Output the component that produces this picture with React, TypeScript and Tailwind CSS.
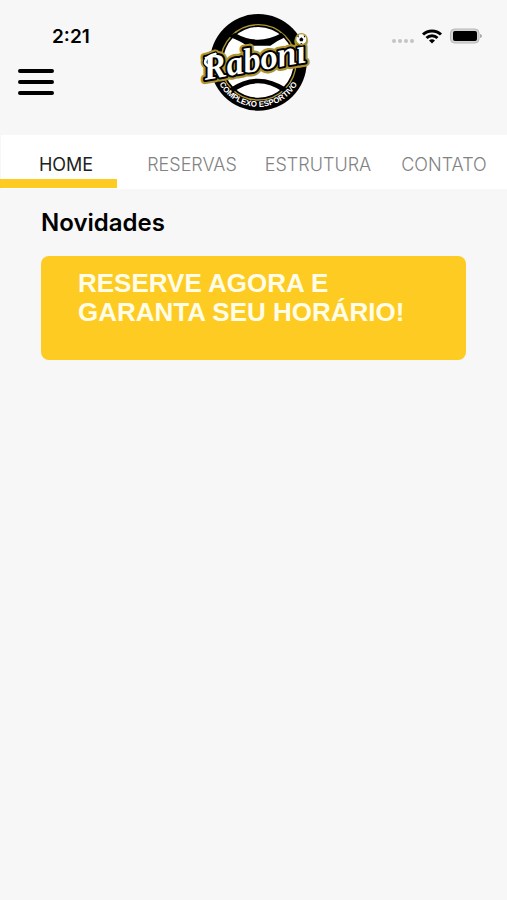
import { useState } from "react";

const tabs = ["HOME", "RESERVAS", "ESTRUTURA", "CONTATO"];

export default function App() {
  const [active, setActive] = useState("HOME");

  return (
    <div className="min-h-screen bg-[#f7f7f7] font-['Inter',sans-serif] text-black">
      <header className="grid h-[135px] grid-cols-[1fr_auto_1fr] items-start">
        <div className="flex flex-col items-start">
          <span className="ml-[52px] mt-[25px] text-[19px] font-semibold leading-6">2:21</span>
          <button type="button" aria-label="Menu" className="ml-[17px] mt-[19px] cursor-pointer">
            <MenuIcon />
          </button>
        </div>
        <Logo />
        <div className="mr-6 mt-7 flex items-center justify-end">
          <StatusIcons />
        </div>
      </header>

      <nav className="ml-px flex h-[54px] bg-white pl-[2px]">
        {tabs.map((tab) => (
          <button
            key={tab}
            type="button"
            onClick={() => setActive(tab)}
            className={`relative flex-1 cursor-pointer pb-[10px] pt-4 text-center text-lg leading-7 ${
              active === tab ? "text-[#222222]" : "font-light text-[#828282]"
            }`}
          >
            {tab}
            {active === tab && <span className="absolute -left-[3px] bottom-px right-3 h-[9px] bg-[#fecb23]" />}
          </button>
        ))}
      </nav>

      <main className="px-[41px] pt-[18px]">
        <h1 className="text-2xl font-semibold leading-8">Novidades</h1>
        <a
          href="#reservas"
          className="mt-[17px] block min-h-[104px] rounded-lg bg-[#fecb23] px-[37px] pt-[13px] font-['Liberation_Sans',sans-serif] text-[26px] font-bold leading-[29px] text-[#fffde8]"
        >
          RESERVE AGORA E
          <br />
          GARANTA SEU HORÁRIO!
        </a>
      </main>
    </div>
  );
}

function MenuIcon() {
  return (
    <svg width="38" height="28" viewBox="0 0 38 28" fill="none" stroke="black" strokeWidth="4" strokeLinecap="round">
      <path d="M3 3h32M3 14h32M3 25h32" />
    </svg>
  );
}

function StatusIcons() {
  return (
    <svg width="91" height="18" viewBox="0 0 91 18" fill="none">
      <g fill="#c4c4c4">
        <circle cx="2" cy="13" r="2" />
        <circle cx="8" cy="13" r="2" />
        <circle cx="14" cy="13" r="2" />
        <circle cx="20" cy="13" r="2" />
      </g>
      <g stroke="black" strokeWidth="3">
        <path d="M31 6.5a13 13 0 0 1 18 0" />
        <path d="M34.5 10a8 8 0 0 1 11 0" />
      </g>
      <path d="M37 12.5a4.5 4.5 0 0 1 6 0l-3 3z" fill="black" />
      <rect x="58.5" y="1" width="28.5" height="14" rx="4" fill="#d4d4d4" stroke="#b8b8b8" />
      <rect x="61" y="3" width="24" height="10" rx="2" fill="black" />
      <path d="M88 6v4q2-.5 2-2t-2-2z" fill="#a8a8a8" />
    </svg>
  );
}

function Logo() {
  return (
    <svg className="mt-[5px]" width="120" height="115" viewBox="0 0 360 345" role="img" aria-label="Raboni Complexo Esportivo">
      <defs>
        <path id="ring" d="M62 200A134 134 0 0 0 324 200" />
      </defs>
      <circle cx="193" cy="172" r="145" fill="black" />
      <circle cx="193" cy="172" r="113" fill="black" stroke="#ad9430" strokeWidth="4" />
      <circle cx="193" cy="172" r="106" fill="white" />
      <g fill="black">
        <path d="M107 92L123 84Q191 124 263 84L275 96Q247 108 229 122H159Q139 108 107 96z" />
        <path d="M107 250Q191 192 279 250L269 262Q191 208 117 262z" />
      </g>
      <text fontFamily="Liberation Sans, sans-serif" fontWeight="bold" fontSize="24" fill="white">
        <textPath href="#ring" startOffset="50%" textAnchor="middle">
          COMPLEXO ESPORTIVO
        </textPath>
      </text>
      <g
        transform="rotate(-10 180 170)"
        fontFamily="Liberation Serif, serif"
        fontStyle="italic"
        fontWeight="bold"
        fontSize="104"
        textAnchor="middle"
        strokeLinejoin="round"
        strokeLinecap="round"
        fill="none"
      >
        <path d="M46 160C26 152 34 130 70 127" stroke="#ad9430" strokeWidth="27" />
        <text x="182" y="199" fill="#ad9430" stroke="#ad9430" strokeWidth="25">Raboni</text>
        <path d="M46 160C26 152 34 130 70 127" stroke="black" strokeWidth="15" />
        <text x="182" y="199" fill="black" stroke="black" strokeWidth="12">Raboni</text>
        <path d="M46 160C26 152 34 130 70 127" stroke="white" strokeWidth="8" />
        <text x="182" y="199" fill="white">Raboni</text>
      </g>
      <circle cx="322" cy="103" r="17" fill="white" stroke="#ad9430" strokeWidth="4" />
      <path d="M322 97l6 5-2 7h-8l-2-7zM310 94l5-3-2 7zM334 94l-5-3 2 7zM318 117l4-3 4 3z" fill="black" />
    </svg>
  );
}
